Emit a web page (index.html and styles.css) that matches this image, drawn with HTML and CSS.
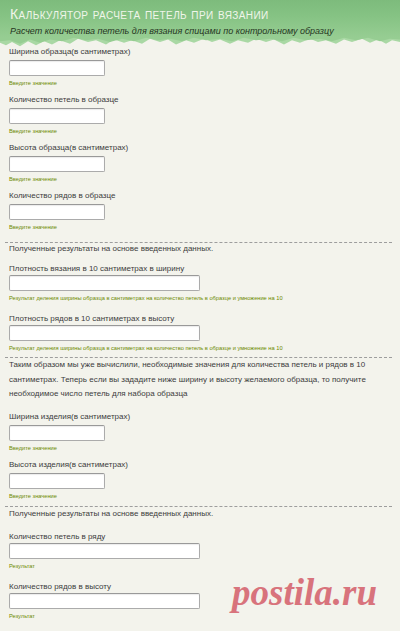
FILE: index.html
```html
<!DOCTYPE html>
<html lang="ru">
<head>
<meta charset="utf-8">
<title>Калькулятор расчета петель при вязании</title>
<link rel="stylesheet" href="styles.css">
</head>
<body>
<div class="page">
  <header class="header">
    <div class="header-band">
      <h1 class="title">Калькулятор расчета петель при вязании</h1>
      <p class="subtitle">Расчет количества петель для вязания спицами по контрольному образцу</p>
    </div>
    <svg class="torn" width="400" height="12" viewBox="0 0 400 12" preserveAspectRatio="none" aria-hidden="true">
      <polygon fill="#a9d8a4" points="0,0 400,0 400,6 392,4 386,8 378,3 370,7 362,2 352,6 344,3 336,8 326,4 318,6 310,2 300,7 292,4 284,9 274,3 266,6 256,2 248,7 238,4 230,8 220,3 212,6 204,2 194,7 186,4 176,9 168,3 160,6 150,2 142,8 132,4 124,7 114,3 106,9 96,4 88,6 78,2 70,8 60,4 52,9 44,5 36,10 28,5 20,11 12,6 6,10 0,7"/>
      <polygon fill="#96cd92" points="0,0 400,0 400,3 390,2 380,5 368,1 356,4 344,1 332,5 320,2 306,4 294,1 282,5 270,2 256,4 244,1 232,5 220,2 206,4 194,1 182,5 170,2 158,4 146,1 134,5 122,2 110,6 98,2 86,4 74,1 62,5 50,3 40,7 30,3 20,8 10,4 0,5"/>
    </svg>
  </header>

  <main class="content">
    <div class="field">
      <label class="label">Ширина образца(в сантиметрах)</label>
      <input class="input" type="text">
      <span class="hint">Введите значение</span>
    </div>
    <div class="field">
      <label class="label">Количество петель в образце</label>
      <input class="input" type="text">
      <span class="hint">Введите значение</span>
    </div>
    <div class="field">
      <label class="label">Высота образца(в сантиметрах)</label>
      <input class="input" type="text">
      <span class="hint">Введите значение</span>
    </div>
    <div class="field">
      <label class="label">Количество рядов в образце</label>
      <input class="input" type="text">
      <span class="hint">Введите значение</span>
    </div>

    <hr class="sep sep-first">
    <p class="section-text">Полученные результаты на основе введенных данных.</p>

    <div class="field field-wide field-after-text">
      <label class="label">Плотность вязания в 10 сантиметрах в ширину</label>
      <input class="input input-wide" type="text">
      <span class="hint">Результат деления ширины образца в сантиметрах на количество петель в образце и умножение на 10</span>
    </div>
    <div class="field field-wide">
      <label class="label">Плотность рядов в 10 сантиметрах в высоту</label>
      <input class="input input-wide" type="text">
      <span class="hint">Результат деления ширины образца в сантиметрах на количество петель в образце и умножение на 10</span>
    </div>

    <hr class="sep sep-second">
    <p class="para">Таким образом мы уже вычислили, необходимые значения для количества петель и рядов в 10<br>сантиметрах. Теперь если вы зададите ниже ширину и высоту желаемого образца, то получите<br>необходимое число петель для набора образца</p>

    <div class="field field-after-para">
      <label class="label">Ширина изделия(в сантиметрах)</label>
      <input class="input" type="text">
      <span class="hint">Введите значение</span>
    </div>
    <div class="field">
      <label class="label">Высота изделия(в сантиметрах)</label>
      <input class="input" type="text">
      <span class="hint">Введите значение</span>
    </div>

    <hr class="sep sep-third">
    <p class="section-text section-text-second">Полученные результаты на основе введенных данных.</p>

    <div class="field field-wide field-after-text2">
      <label class="label">Количество петель в ряду</label>
      <input class="input input-wide" type="text">
      <span class="hint">Результат</span>
    </div>
    <div class="field field-wide">
      <label class="label">Количество рядов в высоту</label>
      <input class="input input-wide" type="text">
      <span class="hint">Результат</span>
    </div>
  </main>

  <div class="watermark">postila.ru</div>
</div>
</body>
</html>
```

FILE: styles.css
```css
html, body {
  margin: 0;
  padding: 0;
}

body {
  background: #f3f3ec;
  font-family: "Liberation Sans", Arial, sans-serif;
  color: #3c3c3c;
}

.page {
  position: relative;
  width: 400px;
  height: 631px;
  overflow: hidden;
  background: #f3f3ec;
}

.header-band {
  background: linear-gradient(180deg, #7dbb7c 0%, #86c384 45%, #96cd92 100%);
  padding: 6px 10px 0;
  height: 31px;
}

.title {
  margin: 0;
  font-size: 14px;
  line-height: 16px;
  font-weight: normal;
  font-variant: small-caps;
  color: #f0f5ea;
  letter-spacing: 0.4px;
  white-space: nowrap;
}

.subtitle {
  margin: 3px 0 0;
  font-size: 9px;
  line-height: 12px;
  font-style: italic;
  color: #26351f;
  white-space: nowrap;
}

.torn {
  display: block;
  width: 400px;
  height: 10px;
}

.content {
  padding: 0 8px 0 9px;
}

.field {
  display: flex;
  flex-direction: column;
  align-items: flex-start;
}

.field + .field {
  margin-top: 8px;
}

.label {
  font-size: 8px;
  line-height: 10px;
  color: #3c3c3c;
  white-space: nowrap;
}

.input {
  box-sizing: border-box;
  width: 96px;
  height: 16px;
  margin: 3px 0 0;
  padding: 0 3px;
  background: #fff;
  border: 1px solid #ababab;
  border-top-color: #999;
  border-radius: 2px;
  box-shadow: inset 0 1px 1px rgba(0, 0, 0, 0.08);
  font-size: 8px;
}

.input-wide {
  width: 191px;
}

.field-wide .input {
  margin-top: 1px;
}

.field-wide + .field-wide {
  margin-top: 12px;
}

.hint {
  margin-top: 3px;
  font-size: 5.7px;
  line-height: 8px;
  color: #6c8a00;
  white-space: nowrap;
}

.sep {
  margin: 0 0 0 -4px;
  width: 387px;
  height: 0;
  border: 0;
  border-top: 1px dashed #9d9d9d;
}

.sep-first {
  margin-top: 11px;
}

.sep-second {
  margin-top: 5px;
}

.sep-third {
  margin-top: 6px;
}

.section-text {
  margin: 1px 0 0;
  font-size: 8px;
  line-height: 10px;
  color: #3c3c3c;
  white-space: nowrap;
}

.section-text-second {
  margin-top: 2px;
}

.field-after-text {
  margin-top: 10px;
}

.field-after-text2 {
  margin-top: 13px;
}

.para {
  margin: 0;
  font-size: 8px;
  line-height: 14.5px;
  color: #3c3c3c;
  white-space: nowrap;
}

.field-after-para {
  margin-top: 10px;
}

.watermark {
  position: absolute;
  left: 232px;
  top: 571px;
  font-family: "Liberation Serif", "DejaVu Serif", serif;
  font-size: 37px;
  font-weight: bold;
  font-style: italic;
  color: #d8737c;
  letter-spacing: 0;
}
```
